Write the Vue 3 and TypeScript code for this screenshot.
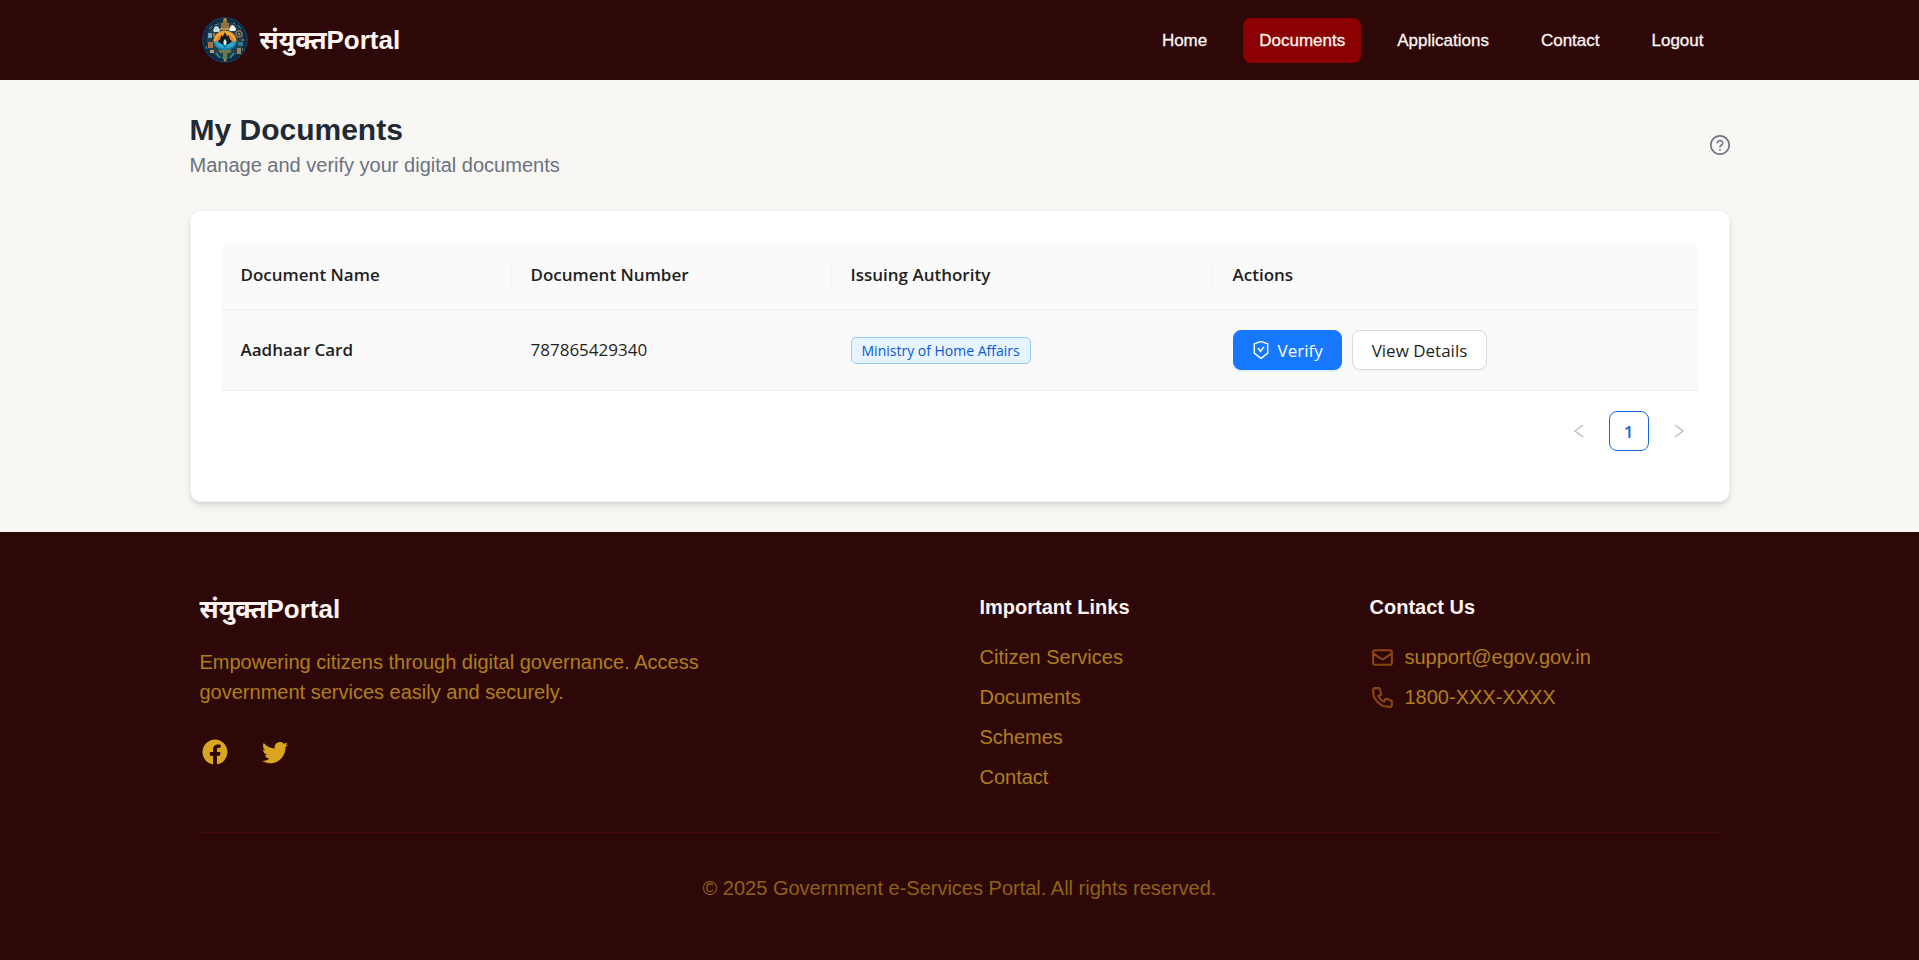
<script setup lang="ts">
interface NavItem {
  label: string
  active?: boolean
}

interface DocumentRow {
  name: string
  number: string
  authority: string
}

const navItems: NavItem[] = [
  { label: 'Home' },
  { label: 'Documents', active: true },
  { label: 'Applications' },
  { label: 'Contact' },
  { label: 'Logout' },
]

const columns: string[] = ['Document Name', 'Document Number', 'Issuing Authority', 'Actions']

const documents: DocumentRow[] = [
  { name: 'Aadhaar Card', number: '787865429340', authority: 'Ministry of Home Affairs' },
]

const footerLinks: string[] = ['Citizen Services', 'Documents', 'Schemes', 'Contact']
</script>

<template>
  <div class="page">
    <header class="topbar">
      <div class="container topbar-inner">
        <a class="brand" href="#">
          <svg class="brand-logo" viewBox="0 0 50 50" aria-hidden="true">
            <circle cx="25" cy="25" r="23" fill="#102a42" />
            <circle cx="25" cy="25" r="22" fill="none" stroke="#1b4868" stroke-width="1" stroke-dasharray="3 1.5" />
            <circle cx="25" cy="25" r="18.5" fill="#1d4150" />
            <path d="M23 5h4v3h2v5h-8V8h2z" fill="#97703a" />
            <path d="M20 13h10v2H20z" fill="#b98f4c" />
            <circle cx="25" cy="4.500" r="1.500" fill="#c09544" />
            <path d="M14 14a2.500 2.500 0 0 1 5-.5 2 2 0 0 1 0 3.500h-5a1.800 1.800 0 0 1 0-3z" fill="#c9d8dc" />
            <path d="M30 13a2.500 2.500 0 0 1 5-.5 2 2 0 0 1 0 3.500h-5a1.800 1.800 0 0 1 0-3z" fill="#f0f4f2" />
            <rect x="8" y="18" width="4" height="5" rx="1" fill="#6fa5b5" />
            <rect x="13" y="18" width="2" height="4" fill="#a8693d" />
            <circle cx="39" cy="19" r="3" fill="none" stroke="#8d6c55" stroke-width="1.500" />
            <circle cx="39" cy="19" r="1" fill="#b8946b" />
            <path d="M13.500 27a11.500 11.500 0 0 1 23 0z" fill="#f3a632" />
            <path d="M16 27a9 8 0 0 1 18 0z" fill="#e8862a" />
            <path d="M13.500 26.500h23a11.500 9 0 0 1-23 0z" fill="#1583ac" />
            <path d="M25 17l2 4.500 1.500-1.500 1.500 4.500 2 1.500-3 3h-8l-3-3 2-1.500 1.500-4.500 1.500 1.500z" fill="#111c26" />
            <path d="M25 24c1.800 2.500 2.500 3.500 0 6.500-2.500-3-1.800-4 0-6.500z" fill="#d9f1ef" />
            <path d="M15 27c4 0 7 1.500 9 6-5 0-8-2-9-6zM35 27c-4 0-7 1.500-9 6 5 0 8-2 9-6z" fill="#35a9cc" />
            <rect x="8" y="27" width="5" height="6" fill="#a96f45" />
            <rect x="10" y="35" width="4" height="3" fill="#b99c6b" />
            <rect x="38" y="27" width="5" height="4" fill="#2f7888" />
            <rect x="37" y="33" width="4" height="6" fill="#9b7f58" />
            <circle cx="43" cy="25" r="1" fill="#c9784a" />
            <path d="M18 35h14l-2 3h-3v5h-4v-5h-3z" fill="#6f7848" />
            <path d="M16 38l4 5M34 38l-4 5M22 43h6" stroke="#3b8d90" stroke-width="1.500" />
            <circle cx="25" cy="45" r="1.500" fill="#b08b43" />
            <path d="M9 14l3-3M38 10l3 4M6 31l1 3M43 33l-1 3M18 9l-3 1M33 8l2 1" stroke="#4f8f98" />
          </svg>
          <span class="brand-name">संयुक्तPortal</span>
        </a>
        <nav class="nav" aria-label="Main">
          <a
            v-for="item in navItems"
            :key="item.label"
            class="nav-link"
            :class="{ active: item.active }"
            href="#"
          >{{ item.label }}</a>
        </nav>
      </div>
    </header>

    <main class="main">
      <div class="heading">
        <div>
          <h1 class="title">My Documents</h1>
          <p class="subtitle">Manage and verify your digital documents</p>
        </div>
        <button class="help" type="button" aria-label="Help">
          <svg viewBox="64 64 896 896" aria-hidden="true">
            <path d="M512 64C264.600 64 64 264.600 64 512s200.600 448 448 448 448-200.600 448-448S759.400 64 512 64zm0 820c-205.400 0-372-166.600-372-372s166.600-372 372-372 372 166.600 372 372-166.600 372-372 372z" />
            <path d="M623.600 316.700C593.600 290.400 554 276 512 276s-81.600 14.500-111.600 40.700C369.200 344 352 380.700 352 420v7.600c0 4.400 3.600 8 8 8h48c4.400 0 8-3.600 8-8V420c0-44.100 43.100-80 96-80s96 35.900 96 80c0 31.100-22 59.600-56.100 72.700-21.200 8.100-39.200 22.300-52.100 40.900-13.100 19-19.900 41.800-19.900 64.900V620c0 4.400 3.600 8 8 8h48c4.400 0 8-3.600 8-8v-22.700a48.300 48.300 0 0 1 30.900-44.800c59-22.700 97.100-74.700 97.100-132.500.1-39.300-17.100-76-48.300-103.300zM472 732a40 40 0 1 0 80 0 40 40 0 1 0-80 0z" />
          </svg>
        </button>
      </div>

      <section class="card">
        <table class="table">
          <thead>
            <tr>
              <th v-for="column in columns" :key="column" scope="col">{{ column }}</th>
            </tr>
          </thead>
          <tbody>
            <tr v-for="doc in documents" :key="doc.number">
              <td class="doc-name">{{ doc.name }}</td>
              <td>{{ doc.number }}</td>
              <td><span class="tag">{{ doc.authority }}</span></td>
              <td>
                <div class="actions">
                  <button class="btn primary" type="button">
                    <svg viewBox="64 64 896 896" aria-hidden="true">
                      <path d="M866.900 169.900L527.100 54.100C523 52.700 517.500 52 512 52s-11 .7-15.100 2.100L157.100 169.900c-8.300 2.800-15.100 12.400-15.100 21.200v482.400c0 8.800 5.700 20.400 12.600 25.900L499.300 968c3.500 2.700 8 4.100 12.600 4.100s9.200-1.300 12.600-4.100l344.700-268.600c6.900-5.400 12.600-17 12.600-25.900V191.100c.2-8.800-6.600-18.300-14.900-21.200zM810 654.300L512 886.500 214 654.300V226.700l298-101.600 298 101.600v427.600zM402.900 417.300H340.100c-6.500 0-10.300 7.400-6.400 12.700l125.900 180.800c12.700 17.500 39 17.500 51.700 0l180.500-252.700c3.900-5.300.1-12.700-6.400-12.700h-56.300c-10.200 0-19.900 4.900-25.900 13.300L485.500 523.800 428.800 430.500c-5.900-8.200-15.500-13.200-25.900-13.200z" />
                    </svg>
                    <span>Verify</span>
                  </button>
                  <button class="btn" type="button">View Details</button>
                </div>
              </td>
            </tr>
          </tbody>
        </table>

        <nav class="pagination" aria-label="Pagination">
          <button class="page-btn" type="button" disabled aria-label="Previous page">
            <svg viewBox="0 0 16 16" aria-hidden="true"><path d="M12 2L4 8l8 6" /></svg>
          </button>
          <button class="page-btn current" type="button" aria-current="page">1</button>
          <button class="page-btn" type="button" disabled aria-label="Next page">
            <svg viewBox="0 0 16 16" aria-hidden="true"><path d="M4 2l8 6-8 6" /></svg>
          </button>
        </nav>
      </section>
    </main>

    <footer class="footer">
      <div class="container">
        <div class="footer-grid">
          <div class="about">
            <h2 class="footer-brand">संयुक्तPortal</h2>
            <p class="about-text">
              Empowering citizens through digital governance. Access government services easily and securely.
            </p>
            <div class="social">
              <a href="#" aria-label="Facebook">
                <svg viewBox="0 0 24 24" aria-hidden="true">
                  <path d="M12 2.040c-5.500 0-10 4.490-10 10.020 0 5 3.660 9.150 8.440 9.900v-7H7.900v-2.900h2.540V9.850c0-2.510 1.490-3.890 3.780-3.890 1.090 0 2.230.19 2.230.19v2.470h-1.260c-1.240 0-1.630.77-1.630 1.560v1.880h2.780l-.45 2.900h-2.330v7a10 10 0 0 0 8.440-9.900c0-5.530-4.500-10.020-10-10.020z" />
                </svg>
              </a>
              <a href="#" aria-label="Twitter">
                <svg viewBox="0 0 24 24" aria-hidden="true">
                  <path d="M22.460 6c-.77.350-1.600.580-2.460.690.880-.530 1.560-1.370 1.880-2.380-.830.500-1.750.850-2.720 1.050C18.370 4.500 17.260 4 16 4c-2.350 0-4.270 1.920-4.270 4.290 0 .340.040.670.110.980C8.280 9.090 5.110 7.380 3 4.790c-.370.630-.580 1.370-.580 2.150 0 1.490.750 2.810 1.910 3.560-.710 0-1.370-.2-1.950-.5v.030c0 2.080 1.480 3.820 3.440 4.210a4.220 4.220 0 0 1-1.930.070 4.280 4.280 0 0 0 4 2.980 8.521 8.521 0 0 1-5.330 1.840c-.340 0-.680-.020-1.020-.060C3.440 20.290 5.700 21 8.120 21 16 21 20.330 14.460 20.330 8.790c0-.190 0-.370-.010-.560.840-.6 1.560-1.360 2.140-2.230z" />
                </svg>
              </a>
            </div>
          </div>

          <nav aria-label="Important Links">
            <h3 class="footer-heading">Important Links</h3>
            <ul class="footer-list">
              <li v-for="link in footerLinks" :key="link"><a href="#">{{ link }}</a></li>
            </ul>
          </nav>

          <div>
            <h3 class="footer-heading">Contact Us</h3>
            <ul class="footer-list">
              <li>
                <svg viewBox="0 0 24 24" aria-hidden="true">
                  <path d="M3 8l7.890 5.260a2 2 0 0 0 2.220 0L21 8M5 19h14a2 2 0 0 0 2-2V7a2 2 0 0 0-2-2H5a2 2 0 0 0-2 2v10a2 2 0 0 0 2 2z" />
                </svg>
                <span>support@egov.gov.in</span>
              </li>
              <li>
                <svg viewBox="0 0 24 24" aria-hidden="true">
                  <path d="M3 5a2 2 0 0 1 2-2h3.280a1 1 0 0 1 .948.684l1.498 4.493a1 1 0 0 1-.502 1.210l-2.257 1.130a11.042 11.042 0 0 0 5.516 5.516l1.130-2.257a1 1 0 0 1 1.210-.502l4.493 1.498a1 1 0 0 1 .684.949V19a2 2 0 0 1-2 2h-1C9.716 21 3 14.284 3 6V5z" />
                </svg>
                <span>1800-XXX-XXXX</span>
              </li>
            </ul>
          </div>
        </div>
        <p class="copyright">© 2025 Government e-Services Portal. All rights reserved.</p>
      </div>
    </footer>
  </div>
</template>

<style>
body {
  margin: 0;
  background: #2e0808;
}
</style>

<style scoped>
.page {
  min-height: 100vh;
  display: flex;
  flex-direction: column;
  background: #f8f7f3;
  font-family: "Liberation Sans", Arial, "Noto Sans Devanagari", "Noto Sans", sans-serif;
  font-size: 20px;
  line-height: 30px;
}

h1,
h2,
h3,
p,
ul {
  margin: 0;
  padding: 0;
}

a {
  color: inherit;
  text-decoration: none;
}

button {
  font-family: inherit;
  cursor: pointer;
}

.container {
  box-sizing: border-box;
  width: 100%;
  max-width: 1600px;
  margin: 0 auto;
  padding: 0 40px;
}

.topbar {
  background: #2e0808;
  color: #fff5f0;
}

.topbar-inner {
  display: flex;
  align-items: center;
  justify-content: space-between;
  min-height: 80px;
}

.brand {
  display: flex;
  align-items: center;
  gap: 10px;
}

.brand-logo {
  width: 50px;
  height: 50px;
}

.brand-name,
.footer-brand {
  font-size: 26px;
  font-weight: 700;
  line-height: 35px;
}

.nav {
  display: flex;
  gap: 20px;
}

.nav-link {
  padding: 10px 16px;
  border-radius: 8px;
  font-size: 17px;
  line-height: 25px;
  -webkit-text-stroke: 0.3px;
}

.nav-link.active {
  background: #8b0000;
}

.main {
  box-sizing: border-box;
  width: 100%;
  max-width: 1600px;
  margin: 0 auto;
  padding: 30px;
}

.heading {
  display: flex;
  align-items: center;
  justify-content: space-between;
  margin-bottom: 30px;
}

.title {
  color: #1f2937;
  font-size: 30px;
  font-weight: 700;
  line-height: 40px;
}

.subtitle {
  color: #6b7280;
}

.help {
  display: flex;
  padding: 0;
  border: 0;
  background: none;
  color: #6b7280;
}

.help svg {
  width: 20px;
  height: 20px;
  fill: currentColor;
}

.card {
  padding: 30px;
  border: 1px solid #f3f2f0;
  border-radius: 10px;
  background: #fff;
  background-clip: padding-box;
  box-shadow: 0 4px 8px -1px rgba(0, 0, 0, 0.12), 0 2px 4px -2px rgba(0, 0, 0, 0.12);
  color: #1f1f1f;
  font-family: "Open Sans", "Noto Sans", sans-serif;
  font-size: 17px;
  line-height: 28px;
}

.table {
  width: 100%;
  border-collapse: separate;
  border-spacing: 0;
  table-layout: fixed;
}

.table th,
.table td {
  padding: 20px;
  border-bottom: 1px solid #f0f0f0;
  background: #fafafa;
  text-align: left;
}

.table th {
  position: relative;
  font-weight: 600;
}

.table th:first-child {
  width: 250px;
  border-top-left-radius: 10px;
}

.table th:nth-child(2) {
  width: 280px;
}

.table th:nth-child(3) {
  width: 342px;
}

.table th:last-child {
  border-top-right-radius: 10px;
}

.table th:not(:last-child)::after {
  content: "";
  position: absolute;
  top: 20px;
  right: 0;
  width: 1px;
  height: 28px;
  background: #f0f0f0;
}

.doc-name {
  font-weight: 600;
}

.tag {
  display: inline-block;
  padding: 0 10px;
  border: 1px solid #91caff;
  border-radius: 5px;
  background: #e6f4ff;
  color: #0958d9;
  font-size: 14px;
  line-height: 25px;
}

.actions {
  display: flex;
  gap: 10px;
}

.btn {
  display: flex;
  align-items: center;
  gap: 8px;
  height: 40px;
  padding: 0 19px;
  border: 1px solid #d9d9d9;
  border-radius: 8px;
  background: #fff;
  box-shadow: 0 2px 0 rgba(0, 0, 0, 0.02);
  color: #1f1f1f;
  font-size: 17px;
  white-space: nowrap;
}

.btn.primary {
  padding: 0 18px;
  border-color: #1677ff;
  background: #1677ff;
  box-shadow: 0 2px 0 rgba(5, 145, 255, 0.1);
  color: #fff;
}

.btn svg {
  width: 18px;
  height: 18px;
  fill: currentColor;
}

.pagination {
  display: flex;
  justify-content: flex-end;
  gap: 10px;
  margin: 20px 0;
}

.page-btn {
  display: flex;
  align-items: center;
  justify-content: center;
  width: 40px;
  height: 40px;
  padding: 0;
  border: 1px solid transparent;
  border-radius: 8px;
  background: #fff;
  color: #bfbfbf;
  font-size: 17px;
  font-weight: 600;
}

.page-btn.current {
  border-color: #1668dc;
  color: #1668dc;
}

.page-btn svg {
  width: 16px;
  height: 16px;
  fill: none;
  stroke: currentColor;
  stroke-width: 1.5;
}

.footer {
  flex: 1;
  padding: 60px 0;
  background: #2e0808;
  color: #b07f1a;
}

.footer-grid {
  display: grid;
  grid-template-columns: repeat(4, 1fr);
  gap: 40px;
  padding-bottom: 40px;
  border-bottom: 1px solid #440808;
}

.about {
  grid-column: span 2;
}

.footer-brand,
.footer-heading {
  margin-bottom: 20px;
  color: #fff5f0;
}

.footer-heading {
  font-size: 20px;
  font-weight: 700;
}

.about-text {
  max-width: 560px;
}

.social {
  display: flex;
  gap: 30px;
  margin-top: 30px;
  color: #daa520;
}

.social a {
  display: flex;
}

.social svg {
  width: 30px;
  height: 30px;
  fill: currentColor;
}

.footer-list {
  display: flex;
  flex-direction: column;
  gap: 10px;
  list-style: none;
}

.footer-list li {
  display: flex;
  align-items: center;
  gap: 10px;
}

.footer-list svg {
  width: 25px;
  height: 25px;
  fill: none;
  stroke: #8b4513;
  stroke-width: 2;
  stroke-linecap: round;
  stroke-linejoin: round;
}

.copyright {
  padding-top: 40px;
  color: #8f6212;
  text-align: center;
}
</style>
